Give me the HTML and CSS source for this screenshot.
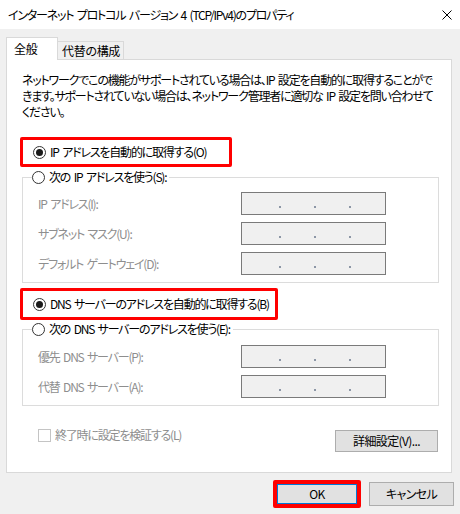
FILE: index.html
```html
<!DOCTYPE html>
<html lang="ja">
<head>
    <meta charset="UTF-8">
    <title>インターネット プロトコル バージョン 4 (TCP/IPv4)のプロパティ</title>
    <link rel="stylesheet" href="styles.css">
</head>
<body>

<!-- Title Bar -->
<div class="titlebar">
    <span class="title">インターネット プロトコル バージョン 4 (TCP/IPv4)のプロパティ</span>
    <svg class="close" width="10" height="10" viewBox="0 0 10 10">
        <path d="M0.5 0.5 L9.5 9.5 M9.5 0.5 L0.5 9.5" stroke="#000" stroke-width="1" fill="none"/>
    </svg>
</div>

<div class="window">
    <!-- Tabs -->
    <div class="tabs">
        <div class="tab active">全般</div>
        <div class="tab">代替の構成</div>
    </div>

    <!-- General Tab -->
    <div class="panel">
        <p class="desc">ネットワークでこの機能がサポートされている場合は、IP 設定を自動的に取得することがで<br>きます。サポートされていない場合は、ネットワーク管理者に適切な IP 設定を問い合わせて<br>ください。</p>

        <div class="mark mark-ip"><span class="radio on"></span>IP アドレスを自動的に取得する(O)</div>

        <fieldset class="group">
            <legend><span class="radio"></span>次の IP アドレスを使う(S):</legend>
            <div class="field"><span class="label">IP アドレス(I):</span><div class="ipbox"><i></i><i></i><i></i></div></div>
            <div class="field"><span class="label">サブネット マスク(U):</span><div class="ipbox"><i></i><i></i><i></i></div></div>
            <div class="field"><span class="label">デフォルト ゲートウェイ(D):</span><div class="ipbox"><i></i><i></i><i></i></div></div>
        </fieldset>

        <div class="mark mark-dns"><span class="radio on"></span>DNS サーバーのアドレスを自動的に取得する(B)</div>

        <fieldset class="group group-dns">
            <legend><span class="radio"></span>次の DNS サーバーのアドレスを使う(E):</legend>
            <div class="field"><span class="label">優先 DNS サーバー(P):</span><div class="ipbox"><i></i><i></i><i></i></div></div>
            <div class="field"><span class="label">代替 DNS サーバー(A):</span><div class="ipbox"><i></i><i></i><i></i></div></div>
        </fieldset>

        <div class="bottom-row">
            <div class="check"><span class="checkbox"></span>終了時に設定を検証する(L)</div>
            <button class="btn btn-advanced" type="button">詳細設定(V)...</button>
        </div>
    </div>

    <!-- Dialog Buttons -->
    <div class="footer">
        <div class="mark-ok"><button class="btn btn-ok" type="button">OK</button></div>
        <button class="btn btn-cancel" type="button">キャンセル</button>
    </div>
</div>

</body>
</html>
```

FILE: styles.css
```css
/* General Styling */
body {
    margin: 0;
    width: 460px;
    height: 514px;
    overflow: hidden;
    background: #f0f0f0;
    font-family: "Noto Sans CJK JP", "Noto Sans", sans-serif;
    font-size: 12px;
    font-feature-settings: "palt";
    letter-spacing: -1.2px;
    word-spacing: 2px;
    color: #000;
}

.titlebar {
    height: 29px;
    box-sizing: border-box;
    padding: 0 8px;
    background: #fff;
    display: flex;
    align-items: center;
    justify-content: space-between;
    line-height: 16px;
}

.window {
    padding: 0 8px 0 6px;
}

/* Tabs */
.tabs {
    display: flex;
    align-items: flex-end;
    height: 30px;
}

.tab {
    height: 18px;
    width: 67px;
    box-sizing: border-box;
    margin-left: -1px;
    padding-left: 4px;
    border: 1px solid #d9d9d9;
    border-bottom: none;
    background: #f0f0f0;
    line-height: 17px;
    letter-spacing: -0.3px;
}

.tab.active {
    position: relative;
    z-index: 1;
    width: 52px;
    height: 23px;
    margin: 0 0 -1px 0;
    padding: 3px 0 0 7px;
    background: #fff;
    line-height: 16px;
}

.panel {
    height: 414px;
    box-sizing: border-box;
    background: #fff;
    border: 1px solid #d9d9d9;
}

.desc {
    margin: 12px 0 0 15px;
    line-height: 16px;
    white-space: nowrap;
}

/* Radio buttons */
.radio {
    width: 13px;
    height: 13px;
    box-sizing: border-box;
    margin-right: 4px;
    border: 1px solid #333;
    border-radius: 50%;
    background: #fff;
    display: inline-flex;
    align-items: center;
    justify-content: center;
    flex-shrink: 0;
}

.radio.on::after {
    content: "";
    width: 7px;
    height: 7px;
    border-radius: 50%;
    background: #1a1a1a;
}

/* Red highlight boxes */
.mark {
    box-sizing: border-box;
    border: 3px solid #f00;
    border-radius: 2px;
    display: flex;
    align-items: center;
    padding-left: 10px;
    line-height: 16px;
    white-space: nowrap;
}

.mark-ip {
    width: 212px;
    height: 30px;
    margin: 17px 0 0 13px;
}

.mark-dns {
    width: 258px;
    height: 32px;
    margin: 5px 0 0 13px;
}

/* Group boxes */
.group {
    margin: 2px 12px 0 15px;
    padding: 7px 0 7px 0;
    border: 1px solid #dcdcdc;
    min-width: 0;
}

.group legend {
    margin-left: 9px;
    padding: 0 3px 0 0;
    display: flex;
    align-items: center;
    line-height: 16px;
}

.group-dns {
    margin-top: 1px;
    padding-top: 8px;
}

.field {
    display: grid;
    grid-template-columns: 203px 145px;
    align-items: center;
    margin: 0 0 7px 15px;
}

.field:last-child {
    margin-bottom: 0;
}

.label {
    color: #8e8e8e;
    line-height: 16px;
}

.ipbox {
    height: 23px;
    box-sizing: border-box;
    border: 1px solid #7a7a7a;
    background: #f0f0f0;
    display: flex;
    gap: 33px;
    padding: 13px 0 0 37px;
}

.ipbox i {
    width: 2px;
    height: 2px;
    background: #8c96a6;
}

/* Bottom row */
.bottom-row {
    display: flex;
    justify-content: space-between;
    align-items: flex-start;
    margin: 21px 13px 0 31px;
}

.check {
    display: flex;
    align-items: center;
    color: #8e8e8e;
    line-height: 16px;
}

.checkbox {
    width: 13px;
    height: 13px;
    box-sizing: border-box;
    margin-right: 4px;
    border: 1px solid #c4c4c4;
    background: #fff;
}

/* Buttons */
.btn {
    font: inherit;
    letter-spacing: -0.6px;
    color: #000;
    background: #e1e1e1;
    border: 1px solid #adadad;
    padding: 0;
    line-height: 16px;
}

.btn-advanced {
    width: 103px;
    height: 22px;
    margin-top: 3px;
}

.footer {
    display: flex;
    justify-content: flex-end;
    align-items: center;
    gap: 8px;
    margin: 7px -2px 0 0;
}

.mark-ok {
    width: 88px;
    height: 28px;
    box-sizing: border-box;
    border: 4px solid #f00;
    border-radius: 2px;
    display: flex;
}

.btn-ok {
    flex: 1;
    border-color: #0078d7;
}

.btn-cancel {
    width: 85px;
    height: 24px;
}
```
